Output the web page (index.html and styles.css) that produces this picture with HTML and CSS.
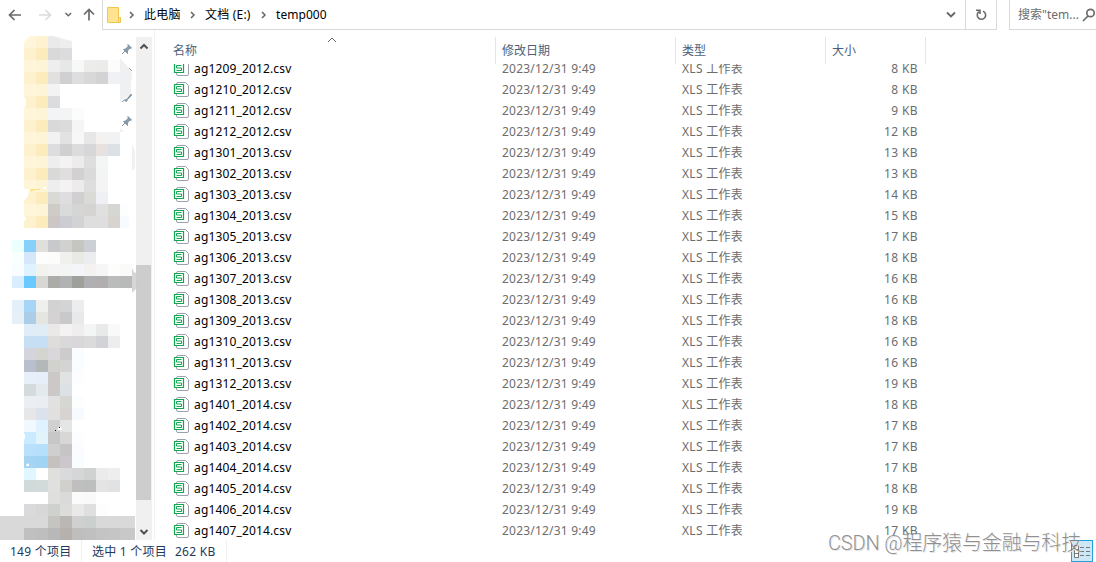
FILE: index.html
```html
<!DOCTYPE html>
<html lang="zh-CN">
<head>
    <meta charset="UTF-8">
    <title>temp000</title>
    <link rel="stylesheet" href="styles.css">
</head>
<body>
    <div class="toolbar">
        <svg class="nav" width="102" height="30" fill="none" stroke="#6b6b6b" stroke-width="1.700">
            <path d="M21 15H10M14.500 10L9.500 15l5 5"/>
            <path d="M39 15h11M45.500 10l5 5-5 5" stroke="#dcdcdc"/>
            <path d="M65.500 13l2.800 2.800 2.800-2.800" stroke-width="1.500"/>
            <path d="M89 20.500V10M84 14.500l5-5 5 5"/>
        </svg>
        <div class="address">
            <svg class="folder" width="14" height="18"><path d="M.5 1.500h11v10h2v5H.5z" fill="#ffe391" stroke="#efc74e"/><path d="M11.500 10v6" stroke="#efc74e"/></svg>
            <svg class="sep" width="6" height="8"><path d="M1 1l3 3-3 3"/></svg>
            <span class="crumb c1">此电脑</span>
            <svg class="sep" width="6" height="8"><path d="M1 1l3 3-3 3"/></svg>
            <span class="crumb c2">文档 (E:)</span>
            <svg class="sep" width="6" height="8"><path d="M1 1l3 3-3 3"/></svg>
            <span class="crumb c3">temp000</span>
            <svg class="drop" width="10" height="8"><path d="M1 1.500l4 4 4-4"/></svg>
        </div>
        <div class="refresh">
            <svg width="12" height="13" fill="none" stroke="#6b6b6b" stroke-width="1.600"><path d="M4 3.700A4.200 4.200 0 1 0 8 3.200M1 2.300h4V6"/></svg>
        </div>
        <div class="search">
            <span>搜索"tem...</span>
            <svg width="14" height="14" fill="none" stroke="#6b6b6b" stroke-width="1.700"><circle cx="8.500" cy="5" r="3.700"/><path d="M6 8L1 13"/></svg>
        </div>
    </div>

    <div class="main">
        <div class="sidebar">
            <svg id="tree" width="155" height="510" viewBox="0 30 155 510">
                <g id="cells" shape-rendering="crispEdges"></g>
                <g fill="#fff">
                    <path d="M24 36h6l-6 6zM53 36h19v5l-8-2zM24 96l2 4v6l-2 2zM24 189h6l-2 7-4 5zM43 187h3v2h-3zM24 215l2 3-1 3h-1zM24 434h1v5h-1zM26 465l3-2v3h-3zM57 430l2-3h2l1 3z"/>
                    <path d="M129 204v36h12v-36zM131 60v36l2-20zM127 204l3 18v-18z"/>
                </g>
                <path d="M30 189h10v1h-5v1h-4v1h-1z" fill="#ffe28a"/>
                <path d="M55 430h1v1h-1zM59 427h1v1h-1z" fill="#111"/>
                <path d="M120 58l8 9 4 6-1 11v9l-4 4-7 4zM120 128l4 4h-4zM132 144l3 8v16l-3 3z" fill="#eff0f1"/>
                <g fill="#8799a5" stroke="#8799a5">
                    <g id="pin"><path d="M128 44.500l3.500 3.500-1 .5-1.500 0-1.500 2.500v2.500l-4-4 2-.500 2.500-2.500z"/><path d="M125 51l-3 3"/></g>
                    <path d="M131 94l.5 1.500-4 4-1 2-2-1 3-2zM125 99.500l-3 2.500M129 68l3 3"/>
                    <use href="#pin" y="72"/>
                </g>
            </svg>
            <div class="scrollbar">
                <svg width="16" height="16"><path d="M4.500 11.500l3.500-3.500 3.500 3.500"/></svg>
                <div class="thumb"></div>
                <svg width="16" height="16"><path d="M4.500 6l3.500 3.500L11.500 6"/></svg>
            </div>
            <svg class="smudge" width="10" height="30"><path d="M1 1l2 4 4 2v3h3v9H7l-3 4-3 3z" fill="#ccc" fill-opacity=".8"/></svg>
        </div>
        <div class="files">
            <div class="head">
                <div class="name">名称<svg class="sort" width="10" height="6"><path d="M1 5l4-4 4 4" fill="none" stroke="#666"/></svg></div>
                <div class="date">修改日期</div>
                <div class="type">类型</div>
                <div class="size">大小</div>
            </div>
            <div class="list"><div id="rows"></div></div>
        </div>
    </div>

    <div class="status">
        <span class="total">149 个项目</span>
        <span class="selected">选中 1 个项目</span>
        <span class="bytes">262 KB</span>
    </div>
    <div class="view-button">
        <svg width="17" height="13" fill="none" stroke="#777"><path d="M.5.5h4v12h-4zM.5 4.500h4M.5 8.500h4" fill="#fff"/><path d="M6 2.500h4m2 0h4M6 6.500h4m2 0h4M6 10.500h4m2 0h4"/></svg>
    </div>
    <div class="watermark">CSDN @程序猿与金融与科技</div>

    <script src="script.js"></script>
</body>
</html>
```
FILE: styles.css
```css
body {
    margin: 0;
    height: 562px;
    overflow: hidden;
    position: relative;
    background: #fff;
    color: #000;
    font: 12px/21px "Noto Sans", "Noto Sans CJK SC", sans-serif;
    white-space: nowrap;
}

svg {
    display: block;
    flex: none;
}

.toolbar {
    display: flex;
    height: 30px;
}

.address {
    display: flex;
    align-items: center;
    box-sizing: border-box;
    width: 864px;
    padding-left: 4px;
    border: solid #d9d9d9;
    border-width: 0 1px 1px;
}

.sep {
    margin-left: 8px;
    fill: none;
    stroke: #666;
    stroke-width: 1.5;
}

.crumb {
    margin-left: 9px;
    line-height: 28px;
}

.c1 {
    width: 38px;
    letter-spacing: 0.2px;
}

.c2 {
    width: 48px;
    letter-spacing: 0.2px;
}

.c3 {
    letter-spacing: 0.05px;
}

.drop {
    margin-left: auto;
    margin-right: 9px;
    fill: none;
    stroke: #666;
    stroke-width: 1.8;
}

.refresh {
    display: flex;
    align-items: center;
    justify-content: center;
    box-sizing: border-box;
    width: 31px;
    border-right: 1px solid #d9d9d9;
    border-bottom: 1px solid #d9d9d9;
}

.search {
    display: flex;
    align-items: center;
    box-sizing: border-box;
    width: 87px;
    margin-left: 12px;
    padding-left: 8px;
    border-left: 1px solid #d9d9d9;
    border-bottom: 1px solid #d9d9d9;
    color: #6d6d6d;
    overflow: hidden;
}

.search span {
    width: 69px;
}

.search svg {
    margin-left: 1px;
}

.main {
    display: flex;
    height: 510px;
}

.sidebar {
    position: relative;
    display: flex;
    box-sizing: border-box;
    width: 155px;
    border-right: 1px solid #f3f3f3;
}

.sidebar #tree {
    margin-right: -19px;
}

.scrollbar {
    position: relative;
    display: flex;
    flex-direction: column;
    width: 16px;
    height: 503px;
    margin-top: 7px;
    background: #f0f0f0;
}

.scrollbar path {
    fill: none;
    stroke: #505050;
    stroke-width: 2;
}

.thumb {
    width: 15px;
    height: 235px;
    margin: 212px 0 24px;
    background: #cdcdcd;
}

.smudge {
    position: absolute;
    left: 131px;
    top: 237px;
}

.files {
    width: 941px;
}

.head {
    display: flex;
    height: 27px;
    margin-top: 7px;
    line-height: 27px;
    color: #4c607a;
}

.head div {
    position: relative;
    box-sizing: border-box;
    border-right: 1px solid #e5e5e5;
}

.name {
    width: 341px;
    padding-left: 18px;
}

.date {
    width: 180px;
    padding-left: 6px;
}

.type {
    width: 150px;
    padding-left: 6px;
}

.size {
    width: 100px;
    padding-left: 6px;
}

.sort {
    position: absolute;
    left: 172px;
    top: 0;
}

.list {
    height: 476px;
    overflow: hidden;
}

#rows {
    margin-top: -6px;
    letter-spacing: 0.2px;
}

.row {
    display: flex;
    box-sizing: border-box;
    height: 21px;
    color: #6d6d6d;
}

.row > div {
    box-sizing: border-box;
}

.row .name {
    display: flex;
    align-items: center;
    color: #000;
    letter-spacing: 0.15px;
}

.row .name svg {
    margin-right: 5px;
}

.row .type {
    letter-spacing: 0.3px;
}

.row .size {
    padding-right: 8px;
    text-align: right;
    letter-spacing: 0.4px;
}

.status {
    display: flex;
    height: 22px;
    line-height: 23px;
    color: #1e395b;
    letter-spacing: 0.25px;
}

.status span {
    box-sizing: border-box;
}

.total {
    width: 82px;
    padding-left: 10px;
    border-right: 1px solid #f0f0f0;
}

.selected {
    width: 93px;
    padding-left: 10px;
}

.bytes {
    width: 52px;
    border-right: 1px solid #f0f0f0;
}

.view-button {
    position: absolute;
    left: 1071px;
    top: 540px;
    display: flex;
    align-items: center;
    justify-content: center;
    box-sizing: border-box;
    width: 22px;
    height: 22px;
    border: 1px solid #26a0da;
    background: #cce8f6;
}

.watermark {
    position: absolute;
    left: 828px;
    top: 529px;
    color: rgba(125, 125, 125, 0.85);
    font: 300 20px/28px Roboto, "Noto Sans CJK SC", sans-serif;
    letter-spacing: -0.15px;
    text-shadow: 1px 1px 0 #e4e4e4;
}
```
FILE: script.js
```js
// censored navigation tree: y, first column, colours of the 12px cells
const cells = [
    [36, 2, 'fff5db fff2d0 eaeaea eeeeee'],
    [48, 2, 'fdf1ce fcebbc dad9da dcdbdd'],
    [60, 2, 'fff6da fdf4d7 eeeeef e7e7e7 f7f9f8 ecedea ebebea fcfcfc'],
    [72, 2, 'fdf1ce fcebbc e2e1df d0d0d2 dedede d8d8d8 d3d3d3 f0f1f4 e9ecef'],
    [84, 2, 'fff6da fdf4d7 f3f3f4'],
    [96, 2, 'fdf1ce fcebbc dcdbde'],
    [108, 2, 'fff6da fdf4d7 f3f4f5 f3f4f4 fcfcfc'],
    [120, 2, 'fdf1ce fcebbc d9d9d9 dbdbdb f5f5f5'],
    [132, 2, 'fff6da fdf4d7 f2f2f3 e2e2e2 f7f7f7 e7e7e7 f3f2f0 f1f2f4'],
    [144, 2, 'fdf1ce fcebbc dddddf d0d0d0 dcdcdd d7d7d9 e7e2df dce1e5'],
    [156, 2, 'fff6da fdf4d7 eeeeee f3f3f3 edebec dededf f4f5f5'],
    [168, 2, 'fdf1ce fcebbc d9d9d8 e0dedf d1d1d1 d9dad9 f3f4f4'],
    [180, 2, 'fff6da fdf4d7 eeeeee f3f3f3 edebec dededf f4f4f4'],
    [192, 2, 'fdf1ce fcebbc d9d9d6 dfdddf d0d0d0 dadad7 eff0f3'],
    [204, 2, 'fff6da fdf4d7 cfcbc7 d9dbda d4d5d4 d6d4d2 e0e0e0 d6d6d3 fcfdff'],
    [216, 2, 'fdf1ce fcebbc ccc7c4 cccdd2 d2d3d2 dedede dedede d7d3cf f7fbff'],
    [240, 1, 'ebfffd 86d0f9 dfdfdb c8c9cb d1d1cf c6c6c1 cccfd5'],
    [252, 1, 'f8ffff d5e7f9 fdfdfd fcfcfb f0f0ee e9e9e6 ecedef'],
    [264, 1, 'f9fdff dff2ff f2f2ef f4f4f4 f4f4f3 f4f5f8 f4f2f0 f6f6f6 fdfdfd fafaf9'],
    [276, 1, 'd8edff 6ac9ff d7d7d4 ababa7 b0b2b4 9f9f9c b0b0b3 b0aeaf b9bcba b8b9b8'],
    [300, 1, 'e4f0f9 a7d5f6 efefed d2d2d2 d4d4d4 ecedef'],
    [312, 1, 'e8f0f7 abcde7 e5e5e2 d4d2d3 c9c9c9 e8e9eb'],
    [324, 2, 'e0edf8 e0edf7 eae9e7 f3f3f3 f0edee f4f6f5 e8eae9 f9f9f9'],
    [336, 2, 'c7def3 c7dff4 dfdddc d9d9da d9d7da dbdbdb d2d3d6 ededed'],
    [348, 2, 'd4d4dc d4d5cf d9d7da cdcccb f9fdff'],
    [360, 2, 'b9bfcc b5b8b8 d1d1ce d6d4d2 f9fdff'],
    [372, 2, 'e7eff9 e6eef9 cdc8c8 e1e3e2 fdfdff'],
    [384, 2, 'd3dbdd e4e9ed cdc8c8 dce1e5'],
    [396, 2, 'ebeff3 eaedf1 e1e1e1 d6d6d3 fcfdff'],
    [408, 2, 'e5e7e9 dbe2eb e0e0e0 d7d3d0 f7fbff'],
    [420, 2, 'f1f9ff def2ff d0d0d1 e4e6e5'],
    [432, 2, 'c9eaff e1f3fb c7c7c7 d8d7d6 fcfdff'],
    [444, 2, 'bae0fb b6dffc cfcfcf c6c4c5 fafcff'],
    [456, 2, 'a6d5f3 a1d3f2 c5c1bf ccc7ca f9fdff'],
    [468, 2, 'e0f7ff ffffff dfdfde d9dadb d6d6d7 d0d2d1 ebebeb eeeeee'],
    [480, 2, 'd0dadb d2dada e0e0e0 d1d0cd bfbfbf bdbebe e4e4e5 e1e2e4'],
    [492, 4, 'dfdfde dadadb fbfbfb f9f9f9'],
    [504, 2, 'dadadc d7d7d7 cfd1cf dcdcdb e9e9e9 dfdfdf fdfdfd'],
    [516, 0, 'd9d9d9 d9d9d9 d9d9d9 d9d9d9 c4c4c1 bab7b5 d0d0d0 cbcfce d9d9d9 d9d9d9 d9d9d9'],
    [528, 0, 'd9d9d9 d9d9d9 c0c0c0 bebebe b8b8b8 b7b1ae bebebe c0c0c0 c4c4c4 c5c5c5 c8c8c8']
];

let svg = '';
cells.forEach(([y, col, colors]) => {
    colors.split(' ').forEach((color, i) => {
        const x = (col + i) * 12;
        svg += `<rect x="${x}" y="${y}" width="${y >= 516 && x === 120 ? 15 : 12}" height="12" fill="#${color}"/>`;
    });
});
document.getElementById('cells').innerHTML = svg;

const icon = `<svg width="16" height="17" fill="none">
    <path d="M3.500 4V3q0-1.500 1.500-1.500h7.500l3 3V14q0 1.500-1.500 1.500H5q-1.500 0-1.500-1.500v-1" stroke="#9aa0ae"/>
    <path d="M1.500 3.500h9v9h-9z" fill="#fff" stroke="#12a84f" stroke-width="1.200"/>
    <path d="M8.500 5.500h-5v2.500h5v2.500h-5" stroke="#12a84f"/>
</svg>`;

const sizes = [8, 8, 9, 12, 13, 13, 14, 15, 17, 18, 16, 16, 18, 16, 16, 19, 18, 17, 17, 17, 18, 19, 17];
let year = 12;
let month = 9;
let rows = '';
sizes.forEach(size => {
    const name = `ag${year}${String(month).padStart(2, '0')}_20${year}.csv`;
    rows += `<div class="row"><div class="name">${icon}${name}</div>
        <div class="date">2023/12/31 9:49</div>
        <div class="type">XLS 工作表</div>
        <div class="size">${size} KB</div></div>`;
    month++;
    if (month > 12) {
        month = 1;
        year++;
    }
});
document.getElementById('rows').innerHTML = rows;
```
